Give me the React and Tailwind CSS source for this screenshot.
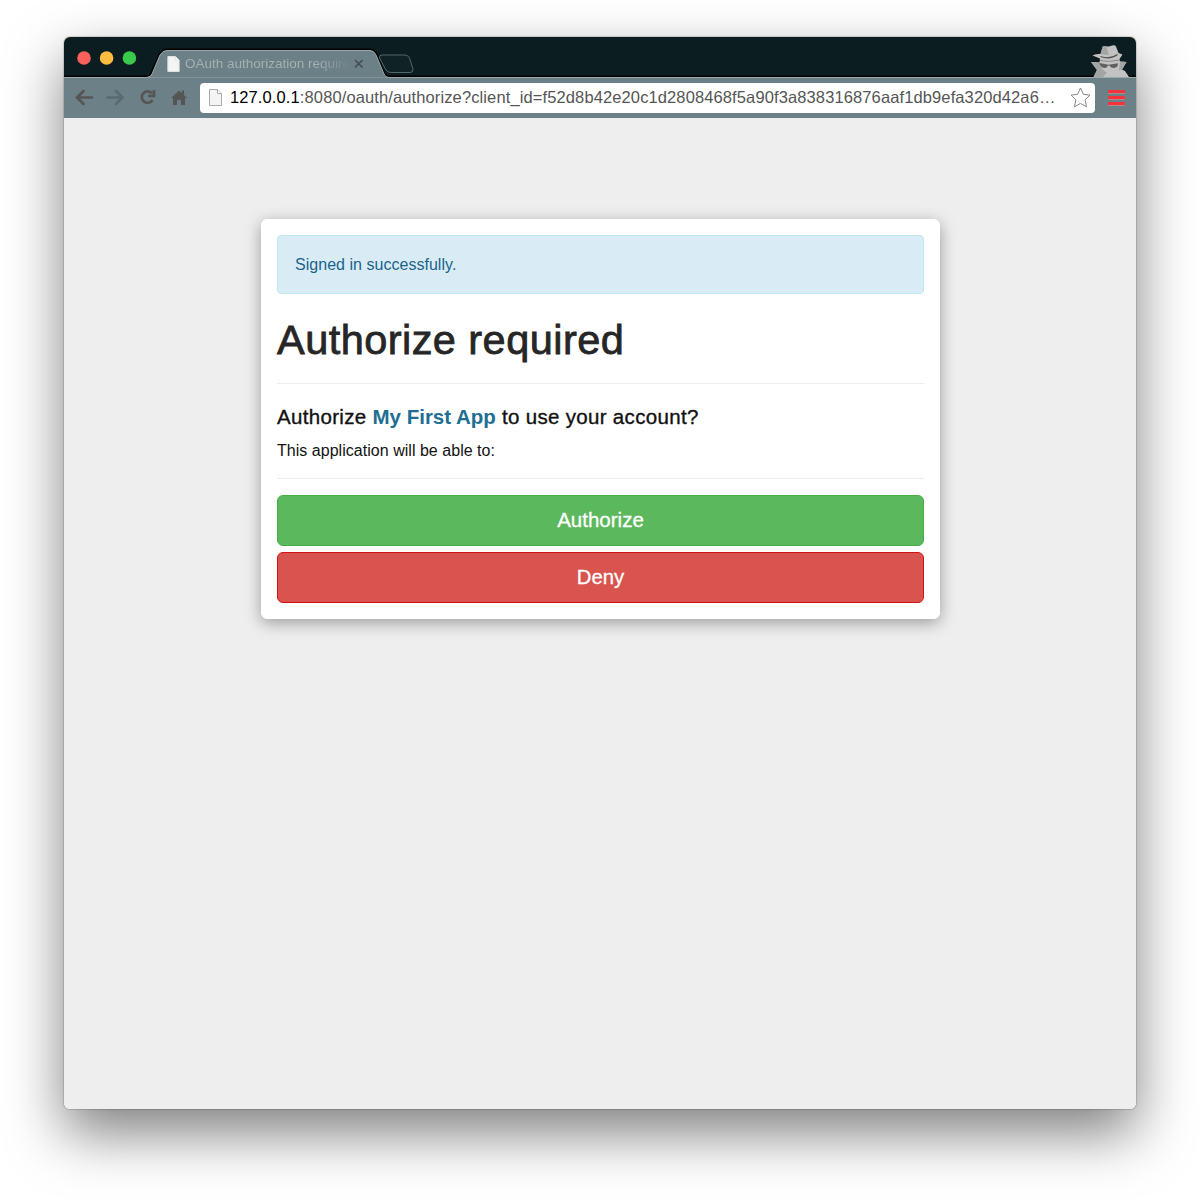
const Page = ({ className, stroke }) => (
  <svg className={className} viewBox="0 0 13 17">
    <path d="M.5.5h8L12.500 4.500v12H.5z" fill="#f4f4f4" stroke={stroke} />
    <path d="M8.500.5v4h4" fill="#fff" stroke={stroke} />
  </svg>
);

const TopBar = () => (
  <div className="relative h-[40px] bg-[#0b1d21]">
    <svg className="absolute left-0 top-0 h-[41px] w-[1072px]" viewBox="0 0 1072 41">
      <path d="M0 40H83Q86 40 87.500 37L96 17.500Q98.500 13 103 13H306Q310 13 312 17L320 37Q321.500 40 325 40H1072" fill="none" stroke="#000" strokeWidth="3" />
      <path d="M0 41V40.500H83Q86.500 40 88 37L96 18Q98.500 13.500 103 13.500H306Q310 13.500 312 18L320 37Q321.500 40.500 325 40.500H1072V41z" fill="#6c8087" stroke="#9aa7ab" />
      <path d="M318 18H341Q344 18 345.500 21L349 32Q349.500 35.500 346 35.500H327Q323.500 35.500 322 33L315.500 21Q315 18 318 18z" fill="#0f2226" stroke="#56656a" />
      <g>
        <circle cx="20" cy="21" r="6.800" fill="#fc605b" />
        <circle cx="42.600" cy="21" r="6.800" fill="#fdbc40" />
        <circle cx="65.400" cy="21" r="6.800" fill="#3ac94a" />
      </g>
      <path d="M291 23l7.500 7.500M298.500 23l-7.500 7.500" stroke="#434c50" strokeWidth="1.500" />
    </svg>
    <div className="absolute left-[103px] top-[18px] flex items-center">
      <Page className="h-[16px] w-[13px]" stroke="#dfe2e3" />
      <span className="ml-[5px] w-max whitespace-nowrap bg-linear-to-r from-[#a7b1b4] from-80% to-transparent bg-clip-text text-[13.500px] leading-[18px] text-transparent">
        OAuth authorization require
      </span>
    </div>
    <svg className="absolute left-[1026px] top-[8px] h-[32px] w-[40px]" viewBox="0 0 40 32">
      <path d="M3.500 32L7 25 1 17l8.500.5.5-4-7.500-3Q5 8.500 10.500 9l2-7Q13.500.3 16 1.300q3 .7 6-.8 3-.8 4 1l2.500 6.500 4 1.500L29.500 14l.5 2.500 6.500.5L32 24.500l3 1.500 4 6z" fill="#c2c2c2" />
      <path d="M12.500 2Q13.500.3 16 1.300L19 10l-8.500-1zM3.500 32L7 25 1 17l8.500.5Q11 25 17 27.500L13 32zM30 16.500l6.500.5L32 24.500l-3 1z" fill="#a4a4a4" />
      <path d="M10.500 11.500q9.500 3.500 17-2" fill="none" stroke="#505050" strokeWidth="1.200" />
      <path d="M10 15.500q9 2 20-.5" fill="none" stroke="#8a8a8a" />
      <path d="M9.500 18l9 1.700L28 18.300q0 4.500-4 4.700-3.500 0-4.500-2.500h-1.500q-1 2.500-3.500 2.500Q10 22.500 9.500 18z" fill="#606060" />
    </svg>
  </div>
);

const Toolbar = () => (
  <div className="flex h-[41px] items-center border-t border-[#9aa7ab] bg-[#6c8087] pb-[1px]">
    <svg className="h-[40px] w-[136px] shrink-0" viewBox="0 0 136 40" fill="none" stroke="#555" strokeWidth="2.700">
      <path d="M28 19.500H13M19.500 13l-6.500 6.500 6.500 6.500" strokeLinecap="round" />
      <path d="M43.500 19.500H58.500M52 13l6.500 6.500L52 26" stroke="#586b72" strokeLinecap="round" />
      <path d="M88 15.500A5.700 5.700 0 1 0 88.500 22M90 12v6h-6" strokeWidth="2.700" />
      <path d="M107 20l8-7.500 3 2.700V12.500h2v4.500l3 3h-2v7h-4v-5h-4v5h-4v-7z" fill="#555" stroke="none" />
    </svg>
    <div className="flex h-[30px] w-[895px] shrink-0 items-center rounded-[4px] bg-white pl-[9px]">
      <Page className="h-[17px] w-[13px]" stroke="#aaa" />
      <span className="mb-[2px] ml-[8px] w-[832px] whitespace-nowrap text-[16.500px] leading-[20px] tracking-[0.115px] text-[#555]">
        <span className="text-black">127.0.0.1</span>:8080/oauth/authorize?client_id=f52d8b42e20c1d2808468f5a90f3a838316876aaf1db9efa320d42a6…
      </span>
      <svg className="ml-[8px] h-[21px] w-[21px]" viewBox="0 0 21 21">
        <path d="M10.500 1l2.900 6.300 6.600.8-4.900 4.700 1.400 7-6-3.400-6 3.400 1.400-7L1 8.100l6.600-.8z" fill="#fff" stroke="#888" strokeLinejoin="round" />
      </svg>
    </div>
    <div className="ml-[13px] flex w-[17px] flex-col gap-[2px]">
      {[0, 1, 2].map((i) => (
        <span key={i} className="h-[4px] rounded-[1px] border-b border-[#b0898e] bg-[#f83238]" />
      ))}
    </div>
  </div>
);

export default function App() {
  return (
    <div className="h-[1200px] w-[1200px] overflow-hidden bg-white pl-[64px] pt-[37px] font-['Liberation_Sans',Arial,sans-serif]">
      <div className="h-[1072px] w-[1072px] rounded-[6px] shadow-[0_0_1px_1px_rgba(0,0,0,0.15),0_24px_56px_rgba(0,0,0,0.5)]">
        <div className="h-full overflow-hidden rounded-[6px] bg-[#eeeeee]">
          <TopBar />
          <Toolbar />
          <main className="ml-[197px] mt-[101px] h-[400px] w-[679px] rounded-[6px] border border-white bg-white px-[15px] pt-[15px] shadow-[0_4px_16px_rgba(0,0,0,0.35)]">
            <div className="flex h-[59px] items-center rounded-[4px] border border-[#bce8f1] bg-[#d9ecf5] px-[17px] text-[16px] tracking-[0.030px] text-[#1a638a]">
              Signed in successfully.
            </div>
            <h1 className="mt-[23px] h-[67px] border-b border-[#ededed] text-[41.500px] leading-[46px] tracking-[0.450px] text-[#262626] [-webkit-text-stroke:0.800px_#262626]">
              Authorize required
            </h1>
            <h4 className="mt-[21px] text-[20.500px] leading-[24px] tracking-[0.320px] text-[#111] [-webkit-text-stroke:0.350px]">
              Authorize <strong className="tracking-normal text-[#206e92] [-webkit-text-stroke:0]">My First App</strong> to use your account?
            </h4>
            <p className="mt-[12px] text-[16px] leading-[20px] tracking-[0.030px] text-[#111]">This application will be able to:</p>
            <hr className="mt-[17px] border-[#ededed]" />
            <button className="mt-[16px] block h-[51px] w-full rounded-[6px] border border-[#46ad46] bg-[#5cb85c] text-[20.500px] text-white [-webkit-text-stroke:0.300px]">Authorize</button>
            <button className="mt-[6px] block h-[51px] w-full rounded-[6px] border border-[#d01414] bg-[#d9534f] text-[20.300px] text-white [-webkit-text-stroke:0.300px]">Deny</button>
          </main>
        </div>
      </div>
    </div>
  );
}
